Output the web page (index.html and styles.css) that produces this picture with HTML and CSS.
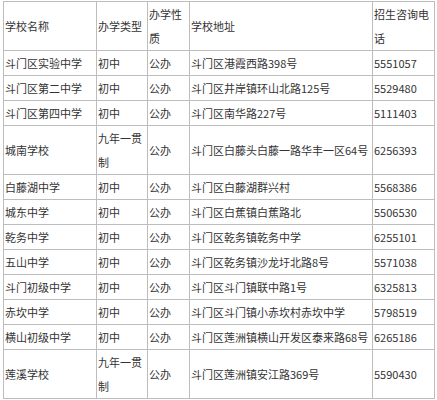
FILE: index.html
```html
<!DOCTYPE html>
<html lang="zh">
<head>
<meta charset="utf-8">
<link rel="stylesheet" href="styles.css">
</head>
<body>
<table class="schools">
  <colgroup>
    <col class="c-name"><col class="c-type"><col class="c-kind"><col class="c-addr"><col class="c-tel">
  </colgroup>
  <tr class="head"><td>学校名称</td><td>办学类型</td><td>办学性质</td><td>学校地址</td><td>招生咨询电话</td></tr>
  <tr><td>斗门区实验中学</td><td>初中</td><td>公办</td><td>斗门区港霞西路398号</td><td>5551057</td></tr>
  <tr><td>斗门区第二中学</td><td>初中</td><td>公办</td><td>斗门区井岸镇环山北路125号</td><td>5529480</td></tr>
  <tr><td>斗门区第四中学</td><td>初中</td><td>公办</td><td>斗门区南华路227号</td><td>5111403</td></tr>
  <tr><td>城南学校</td><td>九年一贯制</td><td>公办</td><td>斗门区白藤头白藤一路华丰一区64号</td><td>6256393</td></tr>
  <tr><td>白藤湖中学</td><td>初中</td><td>公办</td><td>斗门区白藤湖群兴村</td><td>5568386</td></tr>
  <tr><td>城东中学</td><td>初中</td><td>公办</td><td>斗门区白蕉镇白蕉路北</td><td>5506530</td></tr>
  <tr><td>乾务中学</td><td>初中</td><td>公办</td><td>斗门区乾务镇乾务中学</td><td>6255101</td></tr>
  <tr><td>五山中学</td><td>初中</td><td>公办</td><td>斗门区乾务镇沙龙圩北路8号</td><td>5571038</td></tr>
  <tr><td>斗门初级中学</td><td>初中</td><td>公办</td><td>斗门区斗门镇联中路1号</td><td>6325813</td></tr>
  <tr><td>赤坎中学</td><td>初中</td><td>公办</td><td>斗门区斗门镇小赤坎村赤坎中学</td><td>5798519</td></tr>
  <tr><td>横山初级中学</td><td>初中</td><td>公办</td><td>斗门区莲洲镇横山开发区泰来路68号</td><td>6265186</td></tr>
  <tr><td>莲溪学校</td><td>九年一贯制</td><td>公办</td><td>斗门区莲洲镇安江路369号</td><td>5590430</td></tr>
</table>
</body>
</html>
```

FILE: styles.css
```css
html, body {
  margin: 0;
  padding: 0;
  background: #fff;
}
body {
  padding: 1px 0 0 3px;
}
.schools {
  border-collapse: collapse;
  table-layout: fixed;
  width: 431px;
  font-family: "Noto Sans CJK SC", "Noto Sans", sans-serif;
  font-size: 11px;
  line-height: 24px;
  color: #333;
}
.schools td {
  border: 1px solid #bdbdbd;
  padding: 0 1px;
  vertical-align: middle;
  text-align: left;
  word-break: break-all;
}
.c-name { width: 93px; }
.c-type { width: 51px; }
.c-kind { width: 42px; }
.c-addr { width: 183px; }
.c-tel { width: 62px; }
```
